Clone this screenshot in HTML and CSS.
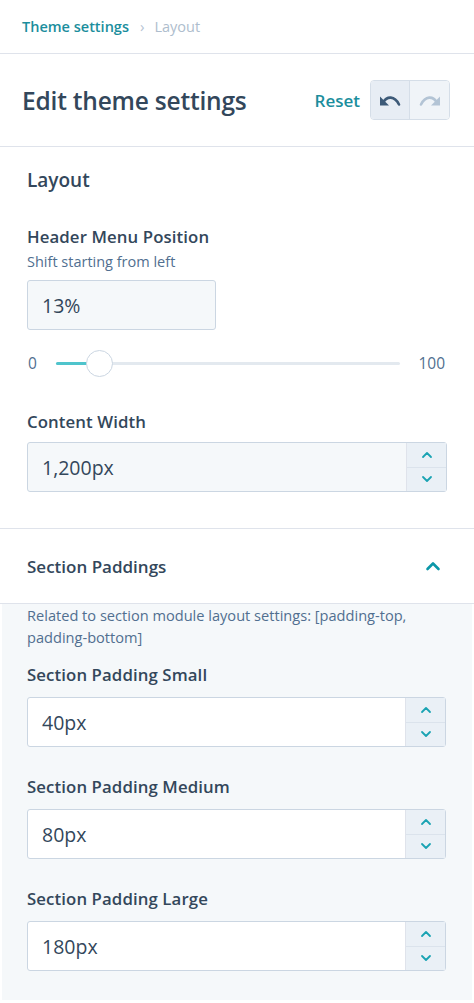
FILE: index.html
```html
<!DOCTYPE html>
<html lang="en">
<head>
<meta charset="utf-8">
<title>Edit theme settings</title>
<link rel="stylesheet" href="styles.css">
</head>
<body>
<nav class="breadcrumb">
  <a class="crumb-link">Theme settings</a>
  <span class="crumb-sep">›</span>
  <span class="crumb-current">Layout</span>
</nav>

<header class="header">
  <h1 class="title">Edit theme settings</h1>
  <div class="actions">
    <a class="reset">Reset</a>
    <div class="btn-group">
      <button class="icon-btn undo" aria-label="Undo">
        <svg width="22" height="14" viewBox="0 0 22 14"><path d="M1 3.5 L1 12.5 L10 12.5 Z" fill="#3d5a78"/><path d="M4.5 9 C8 3 15.5 2.5 20 11.5" fill="none" stroke="#3d5a78" stroke-width="2.6" stroke-linecap="round"/></svg>
      </button>
      <button class="icon-btn redo" aria-label="Redo" disabled>
        <svg width="22" height="14" viewBox="0 0 22 14"><path d="M21 3.5 L21 12.5 L12 12.5 Z" fill="#b3c4d5"/><path d="M17.5 9 C14 3 6.5 2.5 2 11.5" fill="none" stroke="#b3c4d5" stroke-width="2.6" stroke-linecap="round"/></svg>
      </button>
    </div>
  </div>
</header>

<section class="section">
  <h2 class="section-title">Layout</h2>
  <label class="field-label first">Header Menu Position</label>
  <div class="help">Shift starting from left</div>
  <div class="input short"><span>13%</span></div>
  <div class="slider">
    <span class="slider-min">0</span>
    <div class="track">
      <div class="fill" style="width: 13%"></div>
      <div class="thumb" style="left: 13%"></div>
    </div>
    <span class="slider-max">100</span>
  </div>
  <label class="field-label cw">Content Width</label>
  <div class="input number grey">
    <span class="value">1,200px</span>
    <div class="stepper">
      <span class="step"><svg width="12" height="8" viewBox="0 0 12 8"><path d="M2 6 L6 2 L10 6" fill="none" stroke="#1aa3b3" stroke-width="1.8" stroke-linecap="round" stroke-linejoin="round"/></svg></span>
      <span class="step"><svg width="12" height="8" viewBox="0 0 12 8"><path d="M2 2 L6 6 L10 2" fill="none" stroke="#1aa3b3" stroke-width="1.8" stroke-linecap="round" stroke-linejoin="round"/></svg></span>
    </div>
  </div>
</section>

<div class="accordion-head">
  <span class="accordion-title">Section Paddings</span>
  <svg width="16" height="10" viewBox="0 0 16 10"><path d="M2.5 8 L8 2.5 L13.5 8" fill="none" stroke="#0b97a8" stroke-width="2.6" stroke-linecap="round" stroke-linejoin="round"/></svg>
</div>

<div class="panel">
  <p class="panel-help">Related to section module layout settings: [padding-top, padding-bottom]</p>

  <label class="field-label p1">Section Padding Small</label>
  <div class="input number">
    <span class="value">40px</span>
    <div class="stepper">
      <span class="step"><svg width="12" height="8" viewBox="0 0 12 8"><path d="M2 6 L6 2 L10 6" fill="none" stroke="#1aa3b3" stroke-width="1.8" stroke-linecap="round" stroke-linejoin="round"/></svg></span>
      <span class="step"><svg width="12" height="8" viewBox="0 0 12 8"><path d="M2 2 L6 6 L10 2" fill="none" stroke="#1aa3b3" stroke-width="1.8" stroke-linecap="round" stroke-linejoin="round"/></svg></span>
    </div>
  </div>

  <label class="field-label pn">Section Padding Medium</label>
  <div class="input number">
    <span class="value">80px</span>
    <div class="stepper">
      <span class="step"><svg width="12" height="8" viewBox="0 0 12 8"><path d="M2 6 L6 2 L10 6" fill="none" stroke="#1aa3b3" stroke-width="1.8" stroke-linecap="round" stroke-linejoin="round"/></svg></span>
      <span class="step"><svg width="12" height="8" viewBox="0 0 12 8"><path d="M2 2 L6 6 L10 2" fill="none" stroke="#1aa3b3" stroke-width="1.8" stroke-linecap="round" stroke-linejoin="round"/></svg></span>
    </div>
  </div>

  <label class="field-label pn">Section Padding Large</label>
  <div class="input number">
    <span class="value">180px</span>
    <div class="stepper">
      <span class="step"><svg width="12" height="8" viewBox="0 0 12 8"><path d="M2 6 L6 2 L10 6" fill="none" stroke="#1aa3b3" stroke-width="1.8" stroke-linecap="round" stroke-linejoin="round"/></svg></span>
      <span class="step"><svg width="12" height="8" viewBox="0 0 12 8"><path d="M2 2 L6 6 L10 2" fill="none" stroke="#1aa3b3" stroke-width="1.8" stroke-linecap="round" stroke-linejoin="round"/></svg></span>
    </div>
  </div>
</div>
</body>
</html>
```

FILE: styles.css
```css
* { box-sizing: border-box; }

html, body {
  margin: 0;
  padding: 0;
  background: #ffffff;
}

body {
  font-family: "Open Sans", "Noto Sans", sans-serif;
  color: #33475b;
  width: 474px;
}

.breadcrumb {
  height: 54px;
  display: flex;
  align-items: center;
  padding-left: 22px;
  border-bottom: 1px solid #dfe3eb;
  font-size: 14.5px;
  padding-bottom: 1px;
}
.crumb-link {
  color: #1b8e9d;
  font-weight: 600;
}
.crumb-sep {
  color: #b4c3d3;
  margin: 0 10px 0 11px;
  font-size: 15px;
}
.crumb-current {
  color: #aebdcd;
}

.header {
  height: 93px;
  display: flex;
  align-items: center;
  justify-content: space-between;
  padding: 0 24px 0 22px;
  border-bottom: 1px solid #dfe3eb;
}
.title {
  margin: 0;
  font-size: 24.5px;
  font-weight: 600;
  color: #33475b;
  letter-spacing: -0.2px;
}
.actions {
  display: flex;
  align-items: center;
  gap: 10px;
}
.reset {
  color: #1b8e9d;
  font-size: 17px;
  font-weight: 600;
}
.btn-group {
  display: flex;
  border: 1px solid #d5dee8;
  border-radius: 4px;
  overflow: hidden;
  height: 40px;
}
.icon-btn {
  width: 39px;
  height: 38px;
  border: 0;
  padding: 0;
  margin: 0;
  display: flex;
  align-items: center;
  justify-content: center;
}
.icon-btn.undo {
  background: #e7edf4;
  border-right: 1px solid #d5dee8;
}
.icon-btn.redo {
  background: #f0f4f8;
}

.section {
  padding: 21px 27px 36px 27px;
  border-bottom: 1px solid #dfe3eb;
}
.section-title {
  margin: 0;
  font-size: 19px;
  line-height: 24px;
  font-weight: 600;
}
.field-label {
  display: block;
  font-size: 16.8px;
  line-height: 22px;
  font-weight: 600;
  letter-spacing: 0.1px;
  color: #33475b;
}
.field-label.first { margin-top: 34px; }
.field-label.cw { margin-top: 35px; }
.help {
  margin-top: 4px;
  font-size: 14.5px;
  line-height: 20px;
  color: #516f90;
}

.input {
  height: 50px;
  border: 1px solid #cbd6e2;
  border-radius: 3px;
  background: #ffffff;
  display: flex;
  align-items: stretch;
  font-size: 19.5px;
  color: #33475b;
}
.input span, .input .value {
  display: flex;
  align-items: center;
}
.input.short {
  width: 189px;
  margin-top: 8px;
  background: #f5f8fa;
  padding-left: 14px;
}
.field-label.cw + .input { margin-top: 9px; }
.input.number .value {
  flex: 1;
  padding-left: 14px;
}
.input.grey { background: #f5f8fa; }
.stepper {
  width: 40px;
  display: flex;
  flex-direction: column;
  background: #eaf0f6;
  border-left: 1px solid #dfe3eb;
}
.stepper .step {
  flex: 1;
  display: flex;
  align-items: center;
  justify-content: center;
}
.stepper .step + .step {
  border-top: 1px solid #dbe3ec;
}

.slider {
  margin-top: 20px;
  height: 26px;
  display: flex;
  align-items: center;
  font-size: 15.5px;
  color: #516f90;
}
.slider-min {
  width: 29px;
  padding-left: 1px;
}
.track {
  position: relative;
  flex: 1;
  height: 3px;
  background: #e3e9ef;
  border-radius: 2px;
}
.fill {
  height: 3px;
  background: #4fc4cc;
  border-radius: 2px;
}
.thumb {
  position: absolute;
  top: -12px;
  width: 27px;
  height: 27px;
  margin-left: -15px;
  border-radius: 50%;
  background: #ffffff;
  border: 1px solid #cbd6e2;
}
.slider-max {
  width: 47px;
  padding-right: 2px;
  text-align: right;
}

.accordion-head {
  height: 75px;
  display: flex;
  align-items: center;
  justify-content: space-between;
  padding: 0 33px 0 27px;
  border-bottom: 1px solid #dfe3eb;
}
.accordion-title {
  font-size: 17px;
  font-weight: 600;
}

.panel {
  margin: 0 2px;
  background: #f5f8fa;
  padding: 0 26px 28px 25px;
  height: 396px;
}
.panel-help {
  margin: 0;
  font-size: 14.6px;
  line-height: 22px;
  color: #516f90;
}
.field-label.p1 { margin-top: 16px; }
.field-label.pn { margin-top: 29px; }
.panel .field-label + .input { margin-top: 11px; }
```
